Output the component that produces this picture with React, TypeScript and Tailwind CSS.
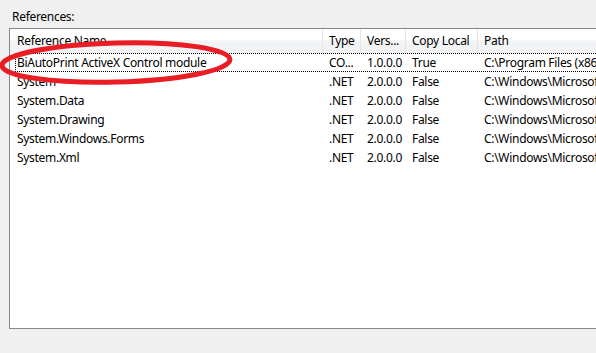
type Reference = {
  name: string;
  type: string;
  version: string;
  copyLocal: string;
  path: string;
};

const references: Reference[] = [
  { name: "BiAutoPrint ActiveX Control module", type: "CO...", version: "1.0.0.0", copyLocal: "True", path: "C:\\Program Files (x86)\\BiAutoPrint\\BiAutoPrint.ocx" },
  { name: "System", type: ".NET", version: "2.0.0.0", copyLocal: "False", path: "C:\\Windows\\Microsoft.NET\\Framework\\v2.0.50727\\System.dll" },
  { name: "System.Data", type: ".NET", version: "2.0.0.0", copyLocal: "False", path: "C:\\Windows\\Microsoft.NET\\Framework\\v2.0.50727\\System.Data.dll" },
  { name: "System.Drawing", type: ".NET", version: "2.0.0.0", copyLocal: "False", path: "C:\\Windows\\Microsoft.NET\\Framework\\v2.0.50727\\System.Drawing.dll" },
  { name: "System.Windows.Forms", type: ".NET", version: "2.0.0.0", copyLocal: "False", path: "C:\\Windows\\Microsoft.NET\\Framework\\v2.0.50727\\System.Windows.Forms.dll" },
  { name: "System.Xml", type: ".NET", version: "2.0.0.0", copyLocal: "False", path: "C:\\Windows\\Microsoft.NET\\Framework\\v2.0.50727\\System.Xml.dll" },
];

const cols = "grid grid-cols-[313px_38px_45px_72px_1fr]";
const headers = ["Reference Name", "Type", "Vers...", "Copy Local", "Path"];

export default function App() {
  return (
    <div
      className="relative h-[353px] w-[596px] overflow-hidden bg-[#f0f0f0] text-[12px] tracking-[-0.3px] text-black"
      style={{ fontFamily: '"Noto Sans", "Open Sans", sans-serif' }}
    >
      <div className="pl-[12px] pt-[9px] h-[28px] leading-[16px]">References:</div>

      <div className="ml-[9px] w-[620px] h-[301px] border border-[#828790] bg-white">
        {/* column header */}
        <div className={`${cols} h-[24px] bg-[linear-gradient(to_bottom,#ffffff_0%,#ffffff_45%,#f3f4f6_50%,#f1f2f4_100%)]`}>
          {headers.map((h, i) => (
            <div
              key={h}
              className={`flex items-center whitespace-nowrap overflow-hidden ${i === 0 ? "pl-[7px]" : "pl-[6px]"} ${i < 4 ? "border-r border-[#e3e5e8]" : ""}`}
            >
              {h}
            </div>
          ))}
        </div>

        {/* rows */}
        {references.map((r, idx) => (
          <div key={r.name} className={`${cols} relative h-[19px]`}>
            {idx === 0 && (
              <span className="absolute left-[5px] right-0 top-0 bottom-0 border border-dotted border-black" />
            )}
            <div className="flex items-center pl-[7px] whitespace-nowrap overflow-hidden">{r.name}</div>
            <div className="flex items-center pl-[6px] whitespace-nowrap overflow-hidden">{r.type}</div>
            <div className="flex items-center pl-[6px] whitespace-nowrap overflow-hidden">{r.version}</div>
            <div className="flex items-center pl-[6px] whitespace-nowrap overflow-hidden">{r.copyLocal}</div>
            <div className="flex items-center pl-[6px] whitespace-nowrap overflow-hidden">{r.path}</div>
          </div>
        ))}
      </div>

      {/* red annotation ellipse */}
      <svg className="pointer-events-none absolute left-0 top-0" width="596" height="353">
        <ellipse
          cx="116"
          cy="62.5"
          rx="114"
          ry="19.5"
          fill="none"
          stroke="#ea1c24"
          strokeWidth="5"
          transform="rotate(-1.5 116 62.5)"
        />
      </svg>
    </div>
  );
}
